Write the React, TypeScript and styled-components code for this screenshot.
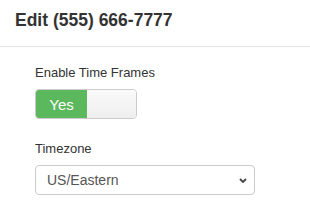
import styled, { createGlobalStyle } from 'styled-components'
import { useState } from 'react'

const GlobalStyle = createGlobalStyle`
  body {
    margin: 0;
    background: #fff;
    font-family: 'Liberation Sans', Arial, sans-serif;
    color: #333;
  }
`

const Header = styled.div`
  height: 47px;
  padding: 0 15px;
  display: flex;
  align-items: center;
  border-bottom: 1px solid #e5e5e5;
  box-sizing: border-box;
`

const Title = styled.h4`
  margin: 0 0 6px 0;
  font-size: 17.5px;
  font-weight: bold;
  color: #333;
`

const Body = styled.div`
  padding: 18px 35px;
  display: flex;
  flex-direction: column;
  gap: 22px;
`

const Field = styled.div`
  display: flex;
  flex-direction: column;
  gap: 9px;
`

const Label = styled.label`
  font-size: 13px;
  color: #333;
`

const Switch = styled.div`
  width: 100px;
  height: 28px;
  display: flex;
  border: 1px solid #ccc;
  border-radius: 4px;
  overflow: hidden;
  cursor: pointer;
`

const SwitchHandle = styled.div<{ $on: boolean }>`
  width: 51px;
  display: flex;
  align-items: center;
  justify-content: center;
  font-size: 15px;
  color: #fff;
  background: ${(p) => (p.$on ? '#5cb85c' : '#eee')};
`

const SwitchLabel = styled.div`
  flex: 1;
  background: linear-gradient(#fafafa, #eeeeee);
`

const SelectWrap = styled.div`
  position: relative;
  width: 220px;
`

const Select = styled.select`
  width: 100%;
  height: 30px;
  padding: 0 24px 0 11px;
  appearance: none;
  font-family: 'Liberation Sans', Arial, sans-serif;
  font-size: 14px;
  color: #555;
  background: #fff;
  border: 1px solid #ccc;
  border-radius: 4px;
`

const Chevron = styled.svg`
  position: absolute;
  right: 8px;
  top: 13px;
  width: 8px;
  height: 5px;
  pointer-events: none;
`

export default function App() {
  const [on, setOn] = useState(true)
  return (
    <>
      <GlobalStyle />
      <Header>
        <Title>Edit (555) 666-7777</Title>
      </Header>
      <Body>
        <Field>
          <Label>Enable Time Frames</Label>
          <Switch onClick={() => setOn(!on)}>
            <SwitchHandle $on={on}>{on ? 'Yes' : 'No'}</SwitchHandle>
            <SwitchLabel />
          </Switch>
        </Field>
        <Field>
          <Label>Timezone</Label>
          <SelectWrap>
            <Select defaultValue="US/Eastern">
              <option>US/Eastern</option>
              <option>US/Central</option>
              <option>US/Mountain</option>
              <option>US/Pacific</option>
            </Select>
            <Chevron viewBox="0 0 8 5">
              <path d="M1 1 L4 4 L7 1" fill="none" stroke="#444" strokeWidth="1.8" />
            </Chevron>
          </SelectWrap>
        </Field>
      </Body>
    </>
  )
}
